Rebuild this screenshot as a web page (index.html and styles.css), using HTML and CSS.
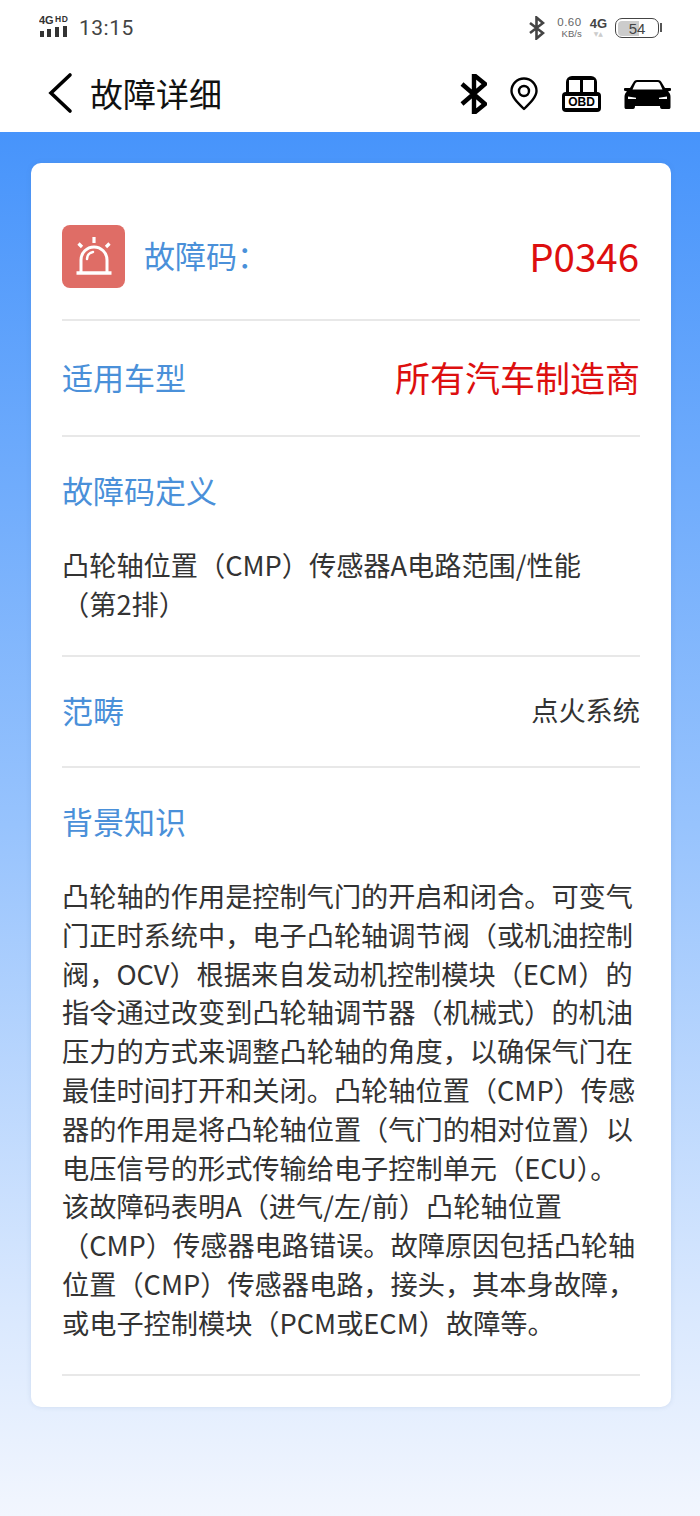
FILE: index.html
```html
<!DOCTYPE html>
<html lang="zh-CN">
<head>
<meta charset="utf-8">
<title>故障详细</title>
<link rel="stylesheet" href="styles.css">
</head>
<body>
<div class="top">
  <div class="status">
    <div class="status-left">
      <svg class="sig" width="30" height="26" viewBox="0 0 30 26">
        <text x="0" y="8.500" class="sig-4g">4G</text>
        <text x="16" y="6.500" class="sig-hd">HD</text>
        <rect x="1" y="16" width="4" height="6" fill="#333"/>
        <rect x="8" y="14" width="4" height="8" fill="#333"/>
        <rect x="16" y="12" width="4" height="10" fill="#333"/>
        <rect x="24" y="11" width="4" height="11" fill="#333"/>
      </svg>
      <span class="time">13:15</span>
    </div>
    <div class="status-right">
      <svg class="st-bt" width="16" height="24" viewBox="0 0 16 24"><path d="M1 7l13 10-6.500 5.500V1.500L14 7 1 17" fill="none" stroke="#444" stroke-width="2.600"/></svg>
      <div class="speed"><span class="speed-a">0.60</span><span class="speed-b">KB/s</span></div>
      <div class="net"><span class="net-a">4G</span><span class="net-b">▼▲</span></div>
      <div class="batt"><div class="batt-fill"></div><span class="batt-num">54</span></div>
    </div>
  </div>
  <div class="nav">
    <div class="nav-left">
      <svg width="26" height="42" viewBox="0 0 26 42"><path d="M23 3L4 21l19 18" fill="none" stroke="#000" stroke-width="3.600" stroke-linecap="round"/></svg>
      <span class="title">故障详细</span>
    </div>
    <div class="nav-right">
      <svg width="27" height="40" viewBox="0 0 27 40"><path d="M2 10l23 20-11 9V1l11 9L2 30" fill="none" stroke="#000" stroke-width="4.400"/></svg>
      <svg width="28" height="34" viewBox="0 0 28 34"><path d="M14 32C7 25 1.500 19.500 1.500 14a12.500 12.500 0 0 1 25 0c0 5.500-5.500 11-12.500 18z" fill="none" stroke="#000" stroke-width="2.400" stroke-linejoin="round"/><circle cx="14" cy="14" r="5" fill="none" stroke="#000" stroke-width="2.400"/></svg>
      <div class="obd">
        <div class="obd-top"><i></i><i></i></div>
        <div class="obd-base"><span class="obd-label">OBD</span></div>
      </div>
      <svg width="47" height="29" viewBox="0 0 47 29"><path d="M13 0H34C36 0 37 1 38 3L41 8H46C47 8 47.500 9 47 10.500L44 11.500C46 13 46.500 15 46.500 17V27C46.500 28.500 46 29 44.500 29H38C36.500 29 36 28 36 26H11C11 28 10.500 29 9 29H2.500C1 29 .5 28.500 .5 27V17C.5 15 1 13 3 11.500L0 10.500C-.5 9 0 8 1 8H6L9 3C10 1 11 0 13 0Z" fill="#000"/><path d="M13.500 2H33.500C34.500 2 35.200 2.500 36 4L38.500 9.500H8.500L11 4C11.800 2.500 12.500 2 13.500 2Z" fill="#fff"/><path d="M4 16.500L12 17.800V19H4ZM43 16.500L35 17.800V19H43Z" fill="#fff"/></svg>
    </div>
  </div>
</div>
<main class="page">
  <section class="card">
    <div class="row row-code">
      <div class="code-left">
        <div class="alarm">
          <svg width="40" height="40" viewBox="0 0 40 40"><path d="M20 1v6" stroke="#fff" stroke-width="3.200" fill="none"/><path d="M4.500 7.500l3.500 3.500M35.500 7.500l-3.500 3.500" stroke="#fff" stroke-width="3.200" fill="none"/><path d="M7 36V24a13 13 0 0 1 26 0v12" fill="none" stroke="#fff" stroke-width="3"/><path d="M13 23a7 7 0 0 1 6-7" fill="none" stroke="#fff" stroke-width="2.500" stroke-linecap="round"/><path d="M2.500 37h35" stroke="#fff" stroke-width="3.500"/></svg>
        </div>
        <span class="label">故障码：</span>
      </div>
      <span class="code">P0346</span>
    </div>
    <div class="row row-model">
      <span class="label">适用车型</span>
      <span class="maker">所有汽车制造商</span>
    </div>
    <div class="row-block row-def">
      <h2 class="label">故障码定义</h2>
      <p class="text">凸轮轴位置（CMP）传感器A电路范围/性能<br>（第2排）</p>
    </div>
    <div class="row row-cat">
      <span class="label">范畴</span>
      <span class="text">点火系统</span>
    </div>
    <div class="row-block row-bg">
      <h2 class="label">背景知识</h2>
      <p class="text">凸轮轴的作用是控制气门的开启和闭合。可变气<br>门正时系统中，电子凸轮轴调节阀（或机油控制<br>阀，OCV）根据来自发动机控制模块（ECM）的<br>指令通过改变到凸轮轴调节器（机械式）的机油<br>压力的方式来调整凸轮轴的角度，以确保气门在<br>最佳时间打开和关闭。凸轮轴位置（CMP）传感<br>器的作用是将凸轮轴位置（气门的相对位置）以<br>电压信号的形式传输给电子控制单元（ECU）。<br>该故障码表明A（进气/左/前）凸轮轴位置<br>（CMP）传感器电路错误。故障原因包括凸轮轴<br>位置（CMP）传感器电路，接头，其本身故障，<br>或电子控制模块（PCM或ECM）故障等。</p>
    </div>
  </section>
</main>
</body>
</html>
```
FILE: styles.css
```css
* { box-sizing: border-box; }
html, body { margin: 0; padding: 0; }
body {
  width: 700px;
  height: 1516px;
  overflow: hidden;
  display: flex;
  flex-direction: column;
  font-family: "Noto Sans CJK SC", "Noto Sans", sans-serif;
  background: #fff;
}
.top { height: 132px; background: #fff; flex: none; }
.status {
  height: 56px;
  display: flex;
  justify-content: space-between;
  align-items: center;
  padding: 0 41px 0 39px;
}
.status-left { display: flex; align-items: center; gap: 10px; }
.sig-4g { font: 700 11px "Liberation Sans", sans-serif; fill: #333; }
.sig-hd { font: 700 8.500px "Liberation Sans", sans-serif; fill: #333; letter-spacing: .5px; }
.time { font: 21px "Roboto", sans-serif; color: #444; letter-spacing: .5px; }
.status-right { display: flex; align-items: center; gap: 8px; }
.st-bt { margin-right: 4px; }
.speed { display: flex; flex-direction: column; align-items: flex-end; color: #666; line-height: 11px; font-family: "Liberation Sans", sans-serif; }
.speed-a { font-size: 11.500px; letter-spacing: .5px; }
.speed-b { font-size: 9.500px; }
.net { display: flex; flex-direction: column; align-items: center; font-family: "Liberation Sans", sans-serif; line-height: 11px; }
.net-a { font-size: 13px; font-weight: 700; color: #444; }
.net-b { font: 6px/9px "DejaVu Sans", sans-serif; color: #ccc; }
.batt {
  position: relative;
  width: 44px;
  height: 20px;
  border: 1.500px solid #444;
  border-radius: 7px;
  display: flex;
  align-items: center;
  justify-content: center;
}
.batt::after {
  content: "";
  position: absolute;
  right: -4px;
  top: 4px;
  width: 2px;
  height: 9px;
  background: #555;
}
.batt-fill { position: absolute; left: 1.500px; top: 1.500px; bottom: 1.500px; width: 21px; background: #ccc; border-radius: 4px 0 0 4px; }
.batt-num { position: relative; font: 15px "Liberation Sans", sans-serif; color: #444; }
.nav {
  height: 76px;
  padding: 0 29px 2px 47px;
  display: flex;
  justify-content: space-between;
  align-items: center;
}
.nav-left { display: flex; align-items: center; gap: 17px; }
.title { font-size: 33px; color: #111; line-height: 40px; }
.nav-right { display: flex; align-items: center; gap: 23px; margin-top: 2px; }
.obd {
  width: 39px;
  height: 36px;
  margin-left: 1px;
  display: flex;
  flex-direction: column;
  align-items: center;
}
.obd-top {
  width: 31px;
  height: 16px;
  background: #000;
  border-radius: 6px 6px 0 0;
  padding: 4px 3px 0;
  display: flex;
  gap: 3px;
  flex: none;
}
.obd-top i { flex: 1; background: #fff; }
.obd-base {
  width: 39px;
  height: 20px;
  background: #000;
  border-radius: 4px;
  padding: 4px 3px;
  flex: none;
}
.obd-label {
  display: block;
  background: #fff;
  color: #000;
  font: 700 12px/12px "Liberation Sans", sans-serif;
  text-align: center;
  height: 12px;
}
.page {
  flex: 1;
  padding: 31px 29px 0 31px;
  background: linear-gradient(180deg, #4794fb 0%, #97c3fd 50%, #d9e8fe 85%, #f2f6fe 100%);
}
.card {
  background: #fff;
  border-radius: 10px;
  height: 1244px;
  padding: 0 31px;
  box-shadow: 0 0 5px rgba(70, 100, 150, .15);
}
.row, .row-block { border-bottom: 2px solid #e8e8e8; }
.row { display: flex; justify-content: space-between; align-items: center; }
.row-code { height: 158px; padding-top: 30px; }
.row-model { height: 116px; padding-bottom: 4px; }
.row-model .label { margin-top: 2px; }
.row-cat { height: 111px; padding-bottom: 4px; }
.code-left { display: flex; align-items: center; gap: 19px; }
.code-left .label { margin-bottom: 2px; }
.alarm {
  width: 63px;
  height: 63px;
  border-radius: 8px;
  background: #df6d66;
  display: flex;
  align-items: center;
  justify-content: center;
}
.label { font-size: 31px; font-weight: 400; color: #4a90d9; margin: 0; line-height: 40px; }
.code { font-size: 38.500px; color: #dd0f0f; margin: 0 1px 2px 0; }
.maker { font-size: 35px; color: #dd0f0f; }
.text { font-size: 27.200px; color: #333; line-height: 38.800px; margin: 0; }
.row-def { height: 220px; padding-top: 33px; }
.row-def .text { margin-top: 35px; }
.row-bg { height: 608px; padding-top: 33px; }
.row-bg .text { margin-top: 35px; }
```
